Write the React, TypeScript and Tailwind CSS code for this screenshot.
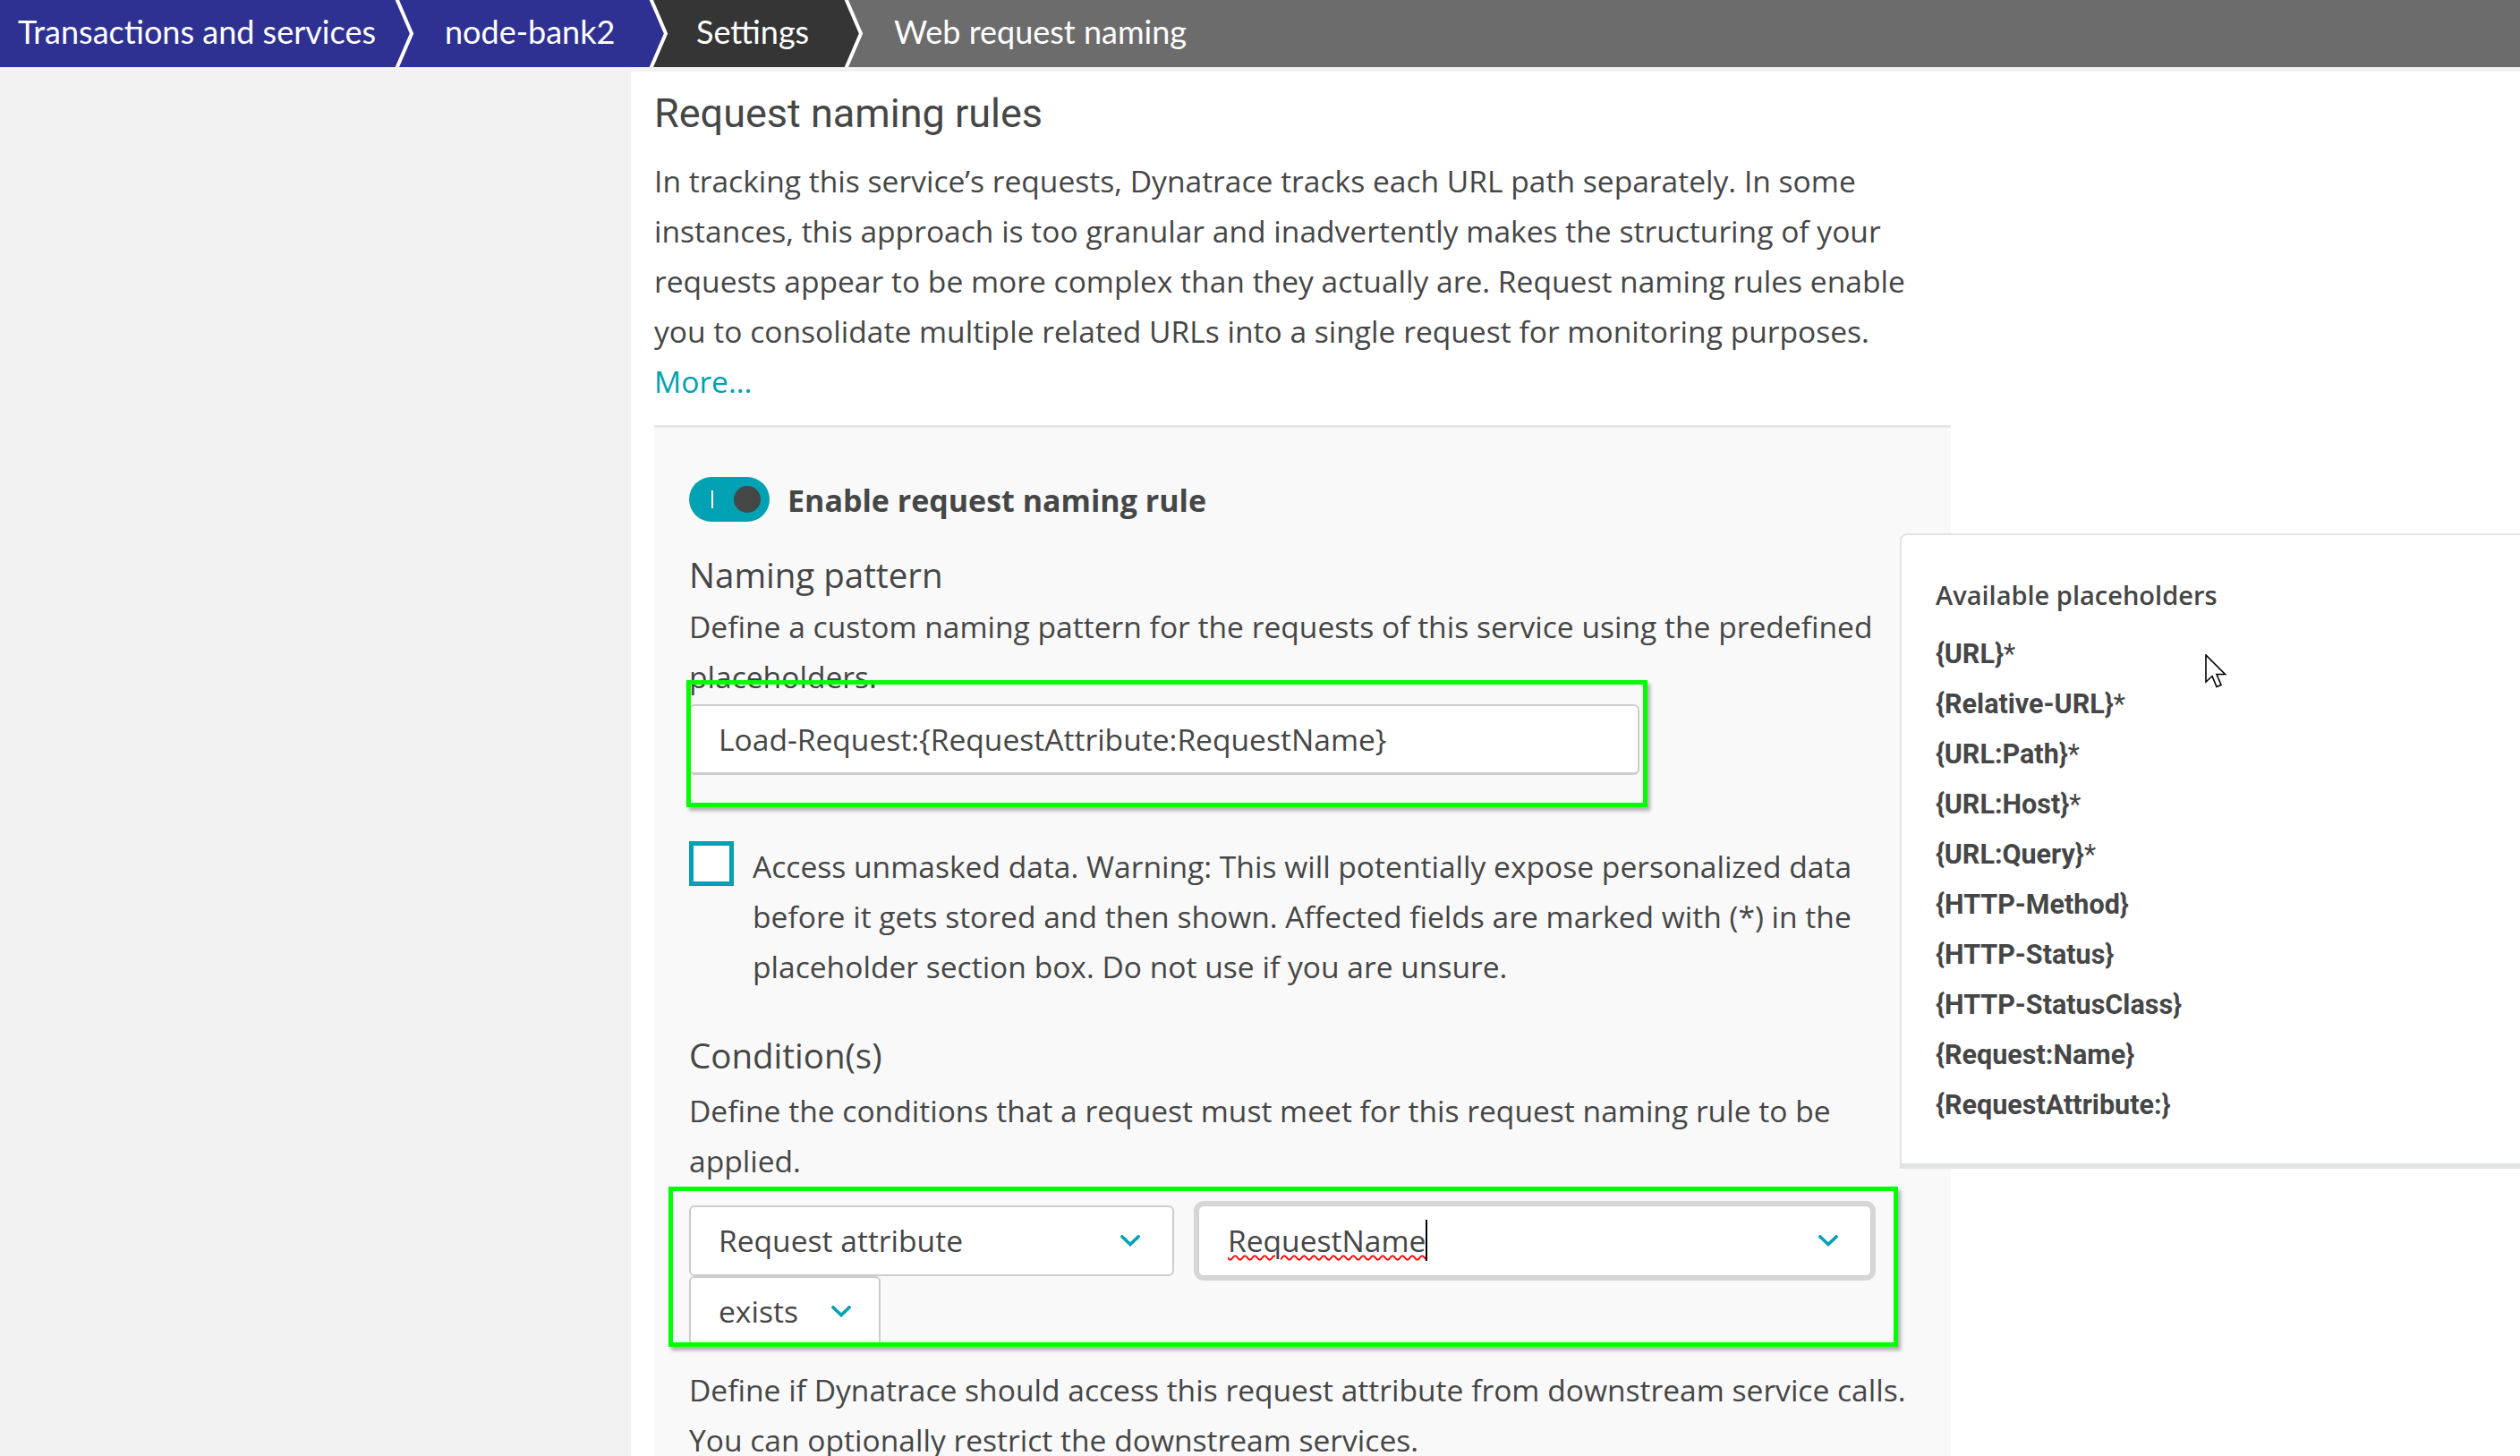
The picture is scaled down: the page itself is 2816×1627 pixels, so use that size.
import React from "react";

const TEAL = "#00a1b2";

function Sep({ left, right }: { left: string; right: string }) {
  return (
    <svg width="24" height="75" viewBox="0 0 24 75" className="shrink-0 block">
      <rect x="0" y="0" width="24" height="75" fill={right} />
      <polygon points="0,0 3,0 20,37.5 3,75 0,75" fill={left} />
      <polyline points="3,-2 20,37.5 3,77" fill="none" stroke="#ffffff" strokeWidth="4" />
    </svg>
  );
}

function Chevron() {
  return (
    <svg width="22" height="13" viewBox="0 0 22 13" className="block shrink-0">
      <polyline points="2,2 11,10.5 20,2" fill="none" stroke={TEAL} strokeWidth="3.6" strokeLinecap="square" />
    </svg>
  );
}

function Cursor() {
  return (
    <svg width="26" height="40" viewBox="0 0 26 40" className="block">
      <path
        d="M1 1 L1 31 L8 24.5 L13 36.5 L18 34.3 L13 22.5 L22.5 22.5 Z"
        fill="#ffffff"
        stroke="#000000"
        strokeWidth="1.6"
        strokeLinejoin="miter"
      />
    </svg>
  );
}

const placeholders: [string, boolean][] = [
  ["{URL}", true],
  ["{Relative-URL}", true],
  ["{URL:Path}", true],
  ["{URL:Host}", true],
  ["{URL:Query}", true],
  ["{HTTP-Method}", false],
  ["{HTTP-Status}", false],
  ["{HTTP-StatusClass}", false],
  ["{Request:Name}", false],
  ["{RequestAttribute:}", false],
];

export default function App() {
  return (
    <div className="w-[2816px] h-[1627px] overflow-hidden bg-[#f2f2f2] text-[#454646] font-['Open_Sans',sans-serif]">
      {/* Breadcrumb header */}
      <header className="flex h-[75px] text-white text-[36px] leading-[43px] font-['Lato',sans-serif]">
        <div className="w-[440px] shrink-0 bg-[#2e3192] pl-[20px] pb-[4px] flex items-center whitespace-nowrap">
          Transactions and services
        </div>
        <Sep left="#2e3192" right="#2e3192" />
        <div className="w-[260px] shrink-0 bg-[#2e3192] pl-[33px] pb-[4px] flex items-center whitespace-nowrap">
          node-bank2
        </div>
        <Sep left="#2e3192" right="#353535" />
        <div className="w-[194px] shrink-0 bg-[#353535] pl-[30px] pb-[4px] flex items-center whitespace-nowrap">
          Settings
        </div>
        <Sep left="#353535" right="#6c6c6c" />
        <div className="flex-1 bg-[#6c6c6c] pl-[33px] pb-[4px] flex items-center whitespace-nowrap">
          Web request naming
        </div>
      </header>

      <div className="flex h-[1552px]">
        <aside className="w-[705px] shrink-0" />
        <main className="relative flex-1 mt-[5px] bg-white pl-[26px]">
          <div className="w-[1449px]">
            <h1 className="pt-[19px] text-[45px] leading-[56px] whitespace-nowrap font-['Roboto',sans-serif]">Request naming rules</h1>
            <p className="mt-[19px] text-[33.6px] leading-[56px] whitespace-nowrap">
              In tracking this service’s requests, Dynatrace tracks each URL path separately. In some
              <br />
              instances, this approach is too granular and inadvertently makes the structuring of your
              <br />
              requests appear to be more complex than they actually are. Request naming rules enable
              <br />
              you to consolidate multiple related URLs into a single request for monitoring purposes.
              <br />
              <span className="text-[#00a1b2]">More...</span>
            </p>

            <section className="relative mt-[21px] h-[1200px] border-t-[3px] border-[#e6e6e6] bg-[#f9f9f9] pl-[39px] pt-[55px]">
              {/* Toggle row */}
              <div className="flex items-center gap-[20px] h-[50px]">
                <div className="flex items-center w-[90px] h-[50px] rounded-full bg-[#00a1b2] pl-[25px] pr-[10px]">
                  <span className="block w-[2px] h-[20px] bg-white" />
                  <span className="ml-auto block w-[30px] h-[30px] rounded-full bg-[#454646]" />
                </div>
                <span className="text-[34px] leading-[50px] font-bold whitespace-nowrap pt-[2px]">Enable request naming rule</span>
              </div>

              <h2 className="mt-[35px] text-[38.5px] leading-[48px]">Naming pattern</h2>
              <p className="mt-[6px] text-[33.6px] leading-[56px] whitespace-nowrap">
                Define a custom naming pattern for the requests of this service using the predefined
                <br />
                placeholders.
              </p>
              <div className="mt-[3px] w-[1062px] h-[79px] flex items-center rounded-[6px] border-2 border-b-[3px] border-[#cccccc] bg-white pl-[31px] text-[33.6px] whitespace-nowrap">
                Load-Request:{"{"}RequestAttribute:RequestName{"}"}
              </div>

              {/* Checkbox */}
              <div className="mt-[74px] flex items-start gap-[21px]">
                <div className="w-[50px] h-[50px] shrink-0 border-[5px] border-[#00a1b2] bg-white" />
                <p className="text-[33.6px] leading-[56px] whitespace-nowrap">
                  Access unmasked data. Warning: This will potentially expose personalized data
                  <br />
                  before it gets stored and then shown. Affected fields are marked with (*) in the
                  <br />
                  placeholder section box. Do not use if you are unsure.
                </p>
              </div>

              <h2 className="mt-[47px] text-[38.5px] leading-[48px]">Condition(s)</h2>
              <p className="mt-[10px] text-[33.6px] leading-[56px] whitespace-nowrap">
                Define the conditions that a request must meet for this request naming rule to be
                <br />
                applied.
              </p>

              {/* Condition selects */}
              <div className="mt-[22px]">
                <div className="flex items-start">
                  <div className="w-[542px] h-[79px] flex items-center justify-between rounded-[6px] border-2 border-[#cccccc] bg-white pl-[31px] pr-[36px] text-[33.6px] whitespace-nowrap">
                    <span>Request attribute</span>
                    <Chevron />
                  </div>
                  <div className="ml-[27px] w-[752px] h-[79px] flex items-center justify-between rounded-[6px] border border-[#cfcfcf] shadow-[0_0_0_5px_#d6d6d6] bg-white pl-[32px] pr-[36px] text-[33.6px] whitespace-nowrap">
                    <span className="flex items-center">
                      <span className="underline decoration-wavy decoration-[#ff0000] decoration-[2px] underline-offset-[3px]">
                        RequestName
                      </span>
                      <span className="block w-[2px] h-[46px] bg-black" />
                    </span>
                    <Chevron />
                  </div>
                </div>
                <div className="w-[214px] h-[79px] flex items-center justify-between rounded-[6px] border-2 border-[#cccccc] bg-white pl-[31px] pr-[31px] text-[33.6px]">
                  <span>exists</span>
                  <Chevron />
                </div>
              </div>

              <p className="mt-[20px] text-[33.6px] leading-[56px] whitespace-nowrap">
                Define if Dynatrace should access this request attribute from downstream service calls.
                <br />
                You can optionally restrict the downstream services.
              </p>

              {/* Annotation boxes */}
              <div className="pointer-events-none absolute left-[36px] top-[282px] w-[1074px] h-[142px] border-[5px] border-[#00ff00] shadow-[3px_4px_4px_rgba(0,0,0,0.3)]" />
              <div className="pointer-events-none absolute left-[16px] top-[848px] w-[1374px] h-[179px] border-[5px] border-[#00ff00] shadow-[3px_4px_4px_rgba(0,0,0,0.3)]" />
            </section>
          </div>

          {/* Available placeholders side panel */}
          <div className="absolute left-[1418px] top-[516px] right-[-12px] h-[710px] rounded-tl-[8px] border-2 border-b-[6px] border-[#e2e4e4] bg-white pl-[38px] pt-[47px]">
            <div className="text-[29px] leading-[40px] font-semibold whitespace-nowrap">Available placeholders</div>
            <ul className="mt-[18px] font-['Roboto',sans-serif]">
              {placeholders.map(([name, star]) => (
                <li key={name} className="text-[30.5px] leading-[56px] font-bold whitespace-nowrap">
                  {name}
                  {star && <span className="font-normal">*</span>}
                </li>
              ))}
            </ul>
          </div>

          {/* Mouse cursor */}
          <div className="pointer-events-none absolute left-[1759px] top-[651px]">
            <Cursor />
          </div>
        </main>
      </div>
    </div>
  );
}
